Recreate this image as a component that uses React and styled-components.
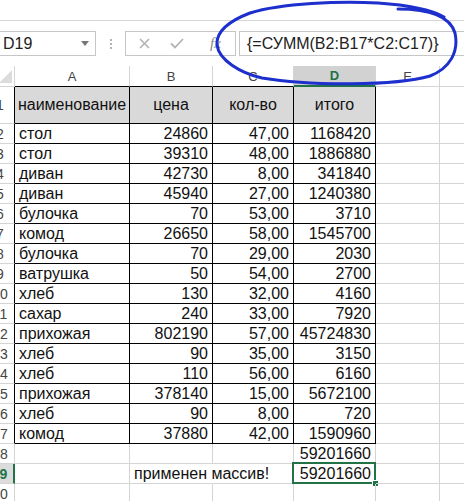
import React from 'react';
import styled, { createGlobalStyle, css } from 'styled-components';

const GREEN = '#217346';
const GRID = '#d4d4d4';

const GlobalStyle = createGlobalStyle`
  html, body {
    margin: 0;
    padding: 0;
    background: #fff;
    overflow: hidden;
  }
  body {
    font-family: "Liberation Sans", Arial, sans-serif;
  }
`;

const Page = styled.div`
  position: relative;
  width: 464px;
  height: 501px;
  overflow: hidden;
`;

// the shot is cropped through the middle of the row header column
const Frame = styled.div`
  margin-left: -14px;
`;

const TopStrip = styled.div`
  height: 20px;
  border-bottom: 1px solid #d6d6d6;
`;

const FormulaBar = styled.div`
  display: flex;
  align-items: center;
  height: 45px;
`;

const NameBox = styled.div`
  box-sizing: border-box;
  width: 110px;
  height: 25px;
  border: 1px solid #c6c6c6;
  display: flex;
  align-items: center;
  justify-content: space-between;
  padding: 0 6px 0 16px;
  font-size: 16px;
  color: #222;
`;

const Arrow = styled.span`
  width: 0;
  height: 0;
  border-left: 4px solid transparent;
  border-right: 4px solid transparent;
  border-top: 5px solid #777;
`;

const Dots = styled.div`
  display: flex;
  flex-direction: column;
  gap: 2px;
  margin: 0 13px 0 14px;
  span {
    width: 2px;
    height: 2px;
    background: #b5b5b5;
  }
`;

const EditBox = styled.div`
  box-sizing: border-box;
  width: 111px;
  height: 25px;
  border: 1px solid #c6c6c6;
  display: flex;
  align-items: center;
  padding-left: 13px;
  gap: 20px;
`;

const Fx = styled.span`
  font-family: "Liberation Serif", serif;
  font-style: italic;
  font-size: 15px;
  color: #888;
  margin-left: 6px;
`;

const FormulaInput = styled.div`
  box-sizing: border-box;
  flex: 1;
  height: 25px;
  margin-left: 3px;
  border: 1px solid #c6c6c6;
  border-right: none;
  display: flex;
  align-items: center;
  padding-left: 7px;
  font-size: 16px;
  color: #222;
  white-space: nowrap;
`;

const Sheet = styled.div`
  display: grid;
  grid-template-columns: 29px 115px 83px 81px 82px 64px 60px;
  grid-template-rows: 21px 37px repeat(19, 20px);
`;

const Corner = styled.div`
  box-sizing: border-box;
  border-right: 1px solid ${GRID};
  border-bottom: 1px solid ${GRID};
  display: flex;
  align-items: flex-end;
  justify-content: flex-end;
  padding: 0 2px 3px 0;
  &::after {
    content: '';
    width: 0;
    height: 0;
    border-left: 13px solid transparent;
    border-bottom: 13px solid #dcdcdc;
  }
`;

const ColHeader = styled.div`
  box-sizing: border-box;
  display: flex;
  align-items: center;
  justify-content: center;
  font-size: 13px;
  color: #444;
  border-right: 1px solid ${GRID};
  border-bottom: 1px solid ${(p) => (p.$edge ? '#000' : GRID)};
  ${(p) =>
    p.$selected &&
    css`
      background: #d2d2d2;
      color: ${GREEN};
      font-weight: bold;
      border-bottom: 2px solid ${GREEN};
    `}
`;

const RowHeader = styled.div`
  box-sizing: border-box;
  display: flex;
  align-items: center;
  justify-content: center;
  font-size: 14px;
  color: #444;
  border-bottom: 1px solid ${GRID};
  border-right: 1px solid ${(p) => (p.$edge ? '#000' : GRID)};
  ${(p) =>
    p.$selected &&
    css`
      background: #dcdcdc;
      color: ${GREEN};
      font-weight: bold;
      border-right: 2px solid ${GREEN};
    `}
`;

const Cell = styled.div`
  box-sizing: border-box;
  position: relative;
  display: flex;
  align-items: center;
  padding: 0 4px;
  font-size: 16px;
  color: #111;
  white-space: nowrap;
  overflow: ${(p) => (p.$spill ? 'visible' : 'hidden')};
  z-index: ${(p) => (p.$spill ? 1 : 0)};
  justify-content: ${(p) =>
    p.$align === 'right' ? 'flex-end' : p.$align === 'center' ? 'center' : 'flex-start'};
  border-right: 1px solid ${(p) => (p.$boxed ? '#000' : GRID)};
  border-bottom: 1px solid ${(p) => (p.$boxed ? '#000' : GRID)};
  ${(p) => p.$spill && css`border-right-color: transparent;`}
  ${(p) => p.$head && css`background: #d9d9d9;`}
`;

const Selection = styled.div`
  position: absolute;
  top: -2px;
  left: -2px;
  right: -1px;
  bottom: -1px;
  border: 2px solid ${GREEN};
  &::after {
    content: '';
    position: absolute;
    right: -5px;
    bottom: -5px;
    width: 5px;
    height: 5px;
    background: ${GREEN};
    border: 1px solid #fff;
  }
`;

const Loop = styled.svg`
  position: absolute;
  top: 0;
  left: 0;
  pointer-events: none;
`;

const rows = [
  ['стол', 24860, '47,00', 1168420],
  ['стол', 39310, '48,00', 1886880],
  ['диван', 42730, '8,00', 341840],
  ['диван', 45940, '27,00', 1240380],
  ['булочка', 70, '53,00', 3710],
  ['комод', 26650, '58,00', 1545700],
  ['булочка', 70, '29,00', 2030],
  ['ватрушка', 50, '54,00', 2700],
  ['хлеб', 130, '32,00', 4160],
  ['сахар', 240, '33,00', 7920],
  ['прихожая', 802190, '57,00', 45724830],
  ['хлеб', 90, '35,00', 3150],
  ['хлеб', 110, '56,00', 6160],
  ['прихожая', 378140, '15,00', 5672100],
  ['хлеб', 90, '8,00', 720],
  ['комод', 37880, '42,00', 1590960],
];

const letters = ['A', 'B', 'C', 'D', 'E', 'F'];

function Blank() {
  return (
    <>
      <Cell />
      <Cell />
    </>
  );
}

export default function App() {
  return (
    <Page>
      <GlobalStyle />
      <Frame>
        <TopStrip />
        <FormulaBar>
          <NameBox>
            D19
            <Arrow />
          </NameBox>
          <Dots>
            <span />
            <span />
            <span />
          </Dots>
          <EditBox>
            <svg width="11" height="11" viewBox="0 0 11 11">
              <path d="M1 1 L10 10 M10 1 L1 10" stroke="#b3b3b3" strokeWidth="1.6" />
            </svg>
            <svg width="14" height="11" viewBox="0 0 14 11">
              <path d="M1 5.5 L5 9.5 L13 1" stroke="#b3b3b3" strokeWidth="1.8" fill="none" />
            </svg>
            <Fx>fx</Fx>
          </EditBox>
          <FormulaInput>{'{=СУММ(B2:B17*C2:C17)}'}</FormulaInput>
        </FormulaBar>

        <Sheet>
          <Corner />
          {letters.map((l, i) => (
            <ColHeader key={l} $edge={i < 3} $selected={l === 'D'}>
              {l}
            </ColHeader>
          ))}

          <RowHeader $edge>1</RowHeader>
          <Cell $boxed $head $align="center">наименование</Cell>
          <Cell $boxed $head $align="center">цена</Cell>
          <Cell $boxed $head $align="center">кол-во</Cell>
          <Cell $boxed $head $align="center">итого</Cell>
          <Blank />

          {rows.map((r, i) => (
            <React.Fragment key={i}>
              <RowHeader $edge>{i + 2}</RowHeader>
              <Cell $boxed>{r[0]}</Cell>
              <Cell $boxed $align="right">{r[1]}</Cell>
              <Cell $boxed $align="right">{r[2]}</Cell>
              <Cell $boxed $align="right">{r[3]}</Cell>
              <Blank />
            </React.Fragment>
          ))}

          <RowHeader>18</RowHeader>
          <Cell />
          <Cell />
          <Cell />
          <Cell $align="right">59201660</Cell>
          <Blank />

          <RowHeader $selected>19</RowHeader>
          <Cell />
          <Cell $spill>применен массив!</Cell>
          <Cell />
          <Cell $align="right" style={{ overflow: 'visible' }}>
            59201660
            <Selection />
          </Cell>
          <Blank />

          <RowHeader>20</RowHeader>
          <Cell />
          <Cell />
          <Cell />
          <Cell />
          <Blank />
        </Sheet>
      </Frame>

      <Loop width="464" height="100" viewBox="0 0 464 100">
        <path
          d="M398 9 C428 9 450 16 455 33 C459 52 450 68 430 76 C395 86 310 86 262 78 C240 73 219 60 217 45 C216 31 229 21 250 13 C282 3 340 1 378 3 C408 5 430 9 444 17"
          stroke="#1d2fcc"
          strokeWidth="3"
          fill="none"
          strokeLinecap="round"
        />
      </Loop>
    </Page>
  );
}
